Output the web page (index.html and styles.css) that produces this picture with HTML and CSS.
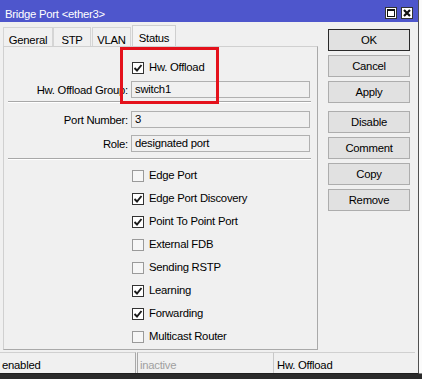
FILE: index.html
```html
<!DOCTYPE html>
<html>
<head>
<meta charset="utf-8">
<link rel="stylesheet" href="styles.css">
</head>
<body>
<div class="screen">
  <div class="window">
    <div class="titlebar">
      <span class="title">Bridge Port &lt;ether3&gt;</span>
      <div class="tb-buttons">
        <span class="tb-btn"><svg width="10" height="10" viewBox="0 0 10 10"><rect x="1.5" y="1.5" width="7" height="7" fill="none" stroke="#111" stroke-width="1"/><line x1="1" y1="2" x2="9" y2="2" stroke="#111" stroke-width="2"/></svg></span>
        <span class="tb-btn"><svg width="10" height="10" viewBox="0 0 10 10"><path d="M2 2 L8 8 M8 2 L2 8" stroke="#111" stroke-width="2.2" fill="none"/></svg></span>
      </div>
    </div>
    <div class="main">
      <div class="left">
        <div class="tabs">
          <div class="tab tab-general">General</div>
          <div class="tab tab-stp">STP</div>
          <div class="tab tab-vlan">VLAN</div>
          <div class="tab tab-status active">Status</div>
        </div>
        <div class="panel">
          <div class="check-row first">
            <span class="cb checked"><svg width="10" height="10" viewBox="0 0 10 10"><path d="M1.5 5 L4 7.5 L8.5 2" stroke="#1a1a1a" stroke-width="1.9" fill="none"/></svg></span>
            <span class="cb-label">Hw. Offload</span>
          </div>
          <div class="field-row r-group">
            <span class="label">Hw. Offload Group:</span>
            <span class="field">switch1</span>
          </div>
          <div class="sep s1"></div>
          <div class="field-row r-port">
            <span class="label">Port Number:</span>
            <span class="field">3</span>
          </div>
          <div class="field-row r-role">
            <span class="label">Role:</span>
            <span class="field">designated port</span>
          </div>
          <div class="sep s2"></div>
          <div class="checks">
            <div class="check-row"><span class="cb"></span><span class="cb-label">Edge Port</span></div>
            <div class="check-row"><span class="cb checked"><svg width="10" height="10" viewBox="0 0 10 10"><path d="M1.5 5 L4 7.5 L8.5 2" stroke="#1a1a1a" stroke-width="1.9" fill="none"/></svg></span><span class="cb-label">Edge Port Discovery</span></div>
            <div class="check-row"><span class="cb checked"><svg width="10" height="10" viewBox="0 0 10 10"><path d="M1.5 5 L4 7.5 L8.5 2" stroke="#1a1a1a" stroke-width="1.9" fill="none"/></svg></span><span class="cb-label">Point To Point Port</span></div>
            <div class="check-row"><span class="cb"></span><span class="cb-label">External FDB</span></div>
            <div class="check-row"><span class="cb"></span><span class="cb-label">Sending RSTP</span></div>
            <div class="check-row"><span class="cb checked"><svg width="10" height="10" viewBox="0 0 10 10"><path d="M1.5 5 L4 7.5 L8.5 2" stroke="#1a1a1a" stroke-width="1.9" fill="none"/></svg></span><span class="cb-label">Learning</span></div>
            <div class="check-row"><span class="cb checked"><svg width="10" height="10" viewBox="0 0 10 10"><path d="M1.5 5 L4 7.5 L8.5 2" stroke="#1a1a1a" stroke-width="1.9" fill="none"/></svg></span><span class="cb-label">Forwarding</span></div>
            <div class="check-row"><span class="cb"></span><span class="cb-label">Multicast Router</span></div>
          </div>
        </div>
      </div>
      <div class="actions">
        <div class="btn default">OK</div>
        <div class="btn">Cancel</div>
        <div class="btn">Apply</div>
        <div class="btn group-start">Disable</div>
        <div class="btn">Comment</div>
        <div class="btn">Copy</div>
        <div class="btn">Remove</div>
      </div>
    </div>
    <div class="statusbar">
      <div class="sfield f1">enabled</div>
      <div class="sfield f2 dim">inactive</div>
      <div class="sfield f3">Hw. Offload</div>
    </div>
    <div class="highlight"></div>
  </div>
  <div class="side"></div>
</div>
</body>
</html>
```
FILE: styles.css
```css
* { box-sizing: border-box; }
html, body { margin: 0; padding: 0; }
body {
  width: 422px;
  height: 379px;
  overflow: hidden;
  background: #2a2a2a;
  font-family: "Liberation Sans", Arial, sans-serif;
  font-size: 11.3px;
  letter-spacing: -0.25px;
  color: #000;
}
.screen { display: flex; height: 374px; }
.window {
  position: relative;
  width: 419px;
  height: 374px;
  background: #f0f0f0;
  border-right: 1px solid #505050;
  border-bottom: 1px solid #1e1e1e;
  display: flex;
  flex-direction: column;
}
.side {
  flex: 1;
  background: #fbfbfb;
  border-bottom: 1px solid #888;
}
.titlebar {
  height: 22px;
  flex: none;
  background: #4e56cc;
  color: #fff;
  display: flex;
  align-items: flex-start;
  padding: 0 5px 0 5px;
}
.title { flex: 1; margin-top: 7px; line-height: 14px; }
.tb-buttons { display: flex; gap: 4px; margin-top: 7px; }
.tb-btn {
  width: 12px; height: 12px;
  background: #fff;
  border: 1px solid #333;
  display: flex; align-items: center; justify-content: center;
}
.main { flex: none; height: 328px; display: flex; }
.left { width: 315px; margin-left: 3px; display: flex; flex-direction: column; }
.tabs { height: 24px; padding-top: 3px; display: flex; align-items: flex-end; }
.tab {
  height: 19px;
  padding-top: 6px;
  line-height: 13px;
  text-align: center;
  background: #f0f0f0;
  border: 1px solid #d5d5d5;
  border-bottom: none;
}
.tab-general { width: 50px; }
.tab-stp { width: 38px; }
.tab-vlan { width: 39px; margin-left: 1px; }
.tab-status { width: 44px; margin-left: 1px; }
.tab.active { height: 21px; background: #f4f4f4; border-color: #cfcfcf; }
.panel {
  flex: 1;
  border: 1px solid #d0d0d0;
  border-right-color: #a9a9a9;
  border-bottom-color: #a9a9a9;
  background: #f0f0f0;
  display: flex;
  flex-direction: column;
}
.check-row { height: 23px; display: flex; align-items: center; padding-left: 128px; }
.check-row.first { margin-top: 9px; }
.cb {
  width: 12px; height: 12px;
  border: 1px solid #9a9a9a;
  background: #f6f6f6;
  display: flex; align-items: center; justify-content: center;
}
.cb.checked { border-color: #333; background: #fff; }
.cb-label { margin-left: 5px; line-height: 13px; }
.field-row { height: 17px; display: flex; align-items: center; }
.r-group { margin-top: 2px; }
.r-port { margin-top: 8px; }
.r-role { margin-top: 7px; }
.label { width: 125px; text-align: right; padding-right: 1px; }
.field {
  margin-left: 2px;
  width: 179px;
  height: 17px;
  line-height: 15px;
  padding-left: 3px;
  border: 1px solid #b0b0b0;
  background: #f0f0f0;
}
.sep { height: 2px; margin: 0 6px 0 4px; border-top: 1px solid #a8a8a8; border-bottom: 1px solid #fff; }
.s1 { margin-top: 3px; }
.s2 { margin-top: 6px; }
.checks { margin-top: 4px; }
.actions { margin-left: 10px; padding-top: 7px; width: 82px; display: flex; flex-direction: column; gap: 4px; }
.btn {
  height: 22px;
  line-height: 20px;
  text-align: center;
  background: #e1e1e1;
  border: 1px solid #adadad;
}
.btn.default { border-color: #2a2a2a; }
.btn.group-start { margin-top: 4px; }
.statusbar { flex: 1; display: flex; padding-top: 2px; }
.sfield {
  padding-top: 6px;
  padding-left: 2px;
  line-height: 13px;
  border-top: 1px solid #d0d0d0;
}
.f1 { width: 136px; border-right: 1px solid #a9a9a9; }
.f2 { width: 137px; margin-left: 1px; border-left: 1px solid #a9a9a9; border-right: 1px solid #c8c8c8; }
.f3 { width: 141px; padding-left: 3px; }
.dim { color: #a0a0a0; }
.highlight {
  position: absolute;
  left: 120px;
  top: 47px;
  width: 99px;
  height: 57px;
  border: 3px solid #e4111b;
}
```
